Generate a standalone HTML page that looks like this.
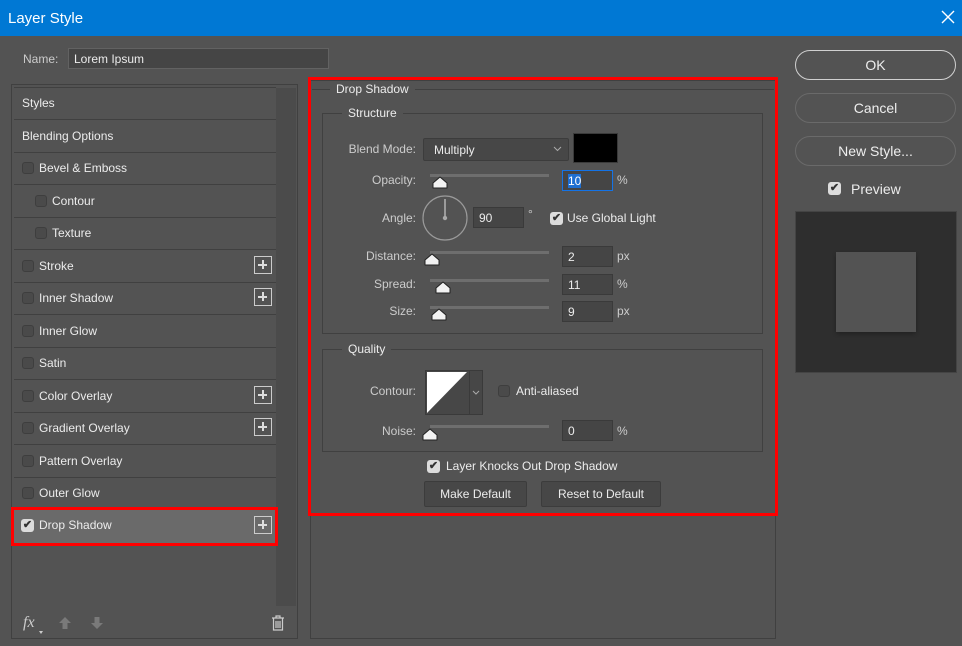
<!DOCTYPE html>
<html><head><meta charset="utf-8"><style>
*{box-sizing:border-box;margin:0;padding:0}
body{width:962px;height:646px;background:#535353;font-family:"Liberation Sans",sans-serif;font-size:12px;color:#ececec;position:relative;overflow:hidden}
.a{position:absolute}
.t{position:absolute;white-space:nowrap;line-height:14px}
.r{text-align:right}
.inp{position:absolute;background:#454545;border:1px solid #3a3a3a;height:21px;padding:3px 0 0 5px;color:#ececec}
.row{position:absolute;left:14px;width:262px;height:33px;border-bottom:1px solid #404040}
.cb{position:absolute;width:12px;height:12px;border:1px solid #3e3e3e;border-radius:3px;background:#4a4a4a}
.cbc{position:absolute;width:13px;height:13px;border-radius:3px;background:#dcdcdc;color:#333;font-size:11px;line-height:13px;text-align:center;font-weight:bold}
.plus{position:absolute;left:254px;width:18px;height:18px;border:1.5px solid #ccc;}
.plus:before{content:"";position:absolute;left:3px;top:6.5px;width:9px;height:2px;background:#ddd}
.plus:after{content:"";position:absolute;left:6.5px;top:3px;width:2px;height:9px;background:#ddd}
.track{position:absolute;left:430px;width:119px;height:3px;background:#6e6e6e}
.thumb{position:absolute}
.grp{position:absolute;border:1px solid #404040}
.leg{position:absolute;background:#535353;padding:0 6px;line-height:14px}
.btn{position:absolute;border:1px solid #6a6a6a;border-radius:15px;text-align:center;font-size:14px;line-height:28px;height:30px;color:#eee}
.bt2{position:absolute;background:#474747;border:1px solid #3c3c3c;border-radius:2px;text-align:center;line-height:24px;height:26px}
</style></head><body>
<div class="a" style="left:0;top:0;width:962px;height:36px;background:#0078d4"></div>
<div class="t" style="left:8px;top:10px;font-size:15px;color:#fff;line-height:17px">Layer Style</div>
<svg class="a" style="left:940px;top:9px" width="16" height="16"><path d="M2 2L14 14M14 2L2 14" stroke="#fff" stroke-width="1.4"/></svg>

<div class="t" style="left:23px;top:52px;color:#ccc">Name:</div>
<div class="inp" style="left:68px;top:48px;width:261px;height:21px;border-color:#626262">Lorem Ipsum</div>

<div class="a" style="left:11px;top:84px;width:287px;height:555px;border:1px solid #404040"></div>
<div class="a" style="left:276px;top:88px;width:20px;height:518px;background:#4b4b4b"></div>
<div class="a" style="left:14px;top:87px;width:262px;height:1px;background:#404040"></div>
<div class="row" style="top:87px"><div class="t" style="left:8px;top:9px">Styles</div></div>
<div class="row" style="top:120px"><div class="t" style="left:8px;top:9px">Blending Options</div></div>
<div class="row" style="top:152px"><div class="cb" style="left:8px;top:10px"></div><div class="t" style="left:25px;top:9px">Bevel &amp; Emboss</div></div>
<div class="row" style="top:185px"><div class="cb" style="left:21px;top:10px"></div><div class="t" style="left:38px;top:9px">Contour</div></div>
<div class="row" style="top:217px"><div class="cb" style="left:21px;top:10px"></div><div class="t" style="left:38px;top:9px">Texture</div></div>
<div class="row" style="top:250px"><div class="cb" style="left:8px;top:10px"></div><div class="t" style="left:25px;top:9px">Stroke</div><div class="plus" style="left:240px;top:6px"></div></div>
<div class="row" style="top:282px"><div class="cb" style="left:8px;top:10px"></div><div class="t" style="left:25px;top:9px">Inner Shadow</div><div class="plus" style="left:240px;top:6px"></div></div>
<div class="row" style="top:315px"><div class="cb" style="left:8px;top:10px"></div><div class="t" style="left:25px;top:9px">Inner Glow</div></div>
<div class="row" style="top:347px"><div class="cb" style="left:8px;top:10px"></div><div class="t" style="left:25px;top:9px">Satin</div></div>
<div class="row" style="top:380px"><div class="cb" style="left:8px;top:10px"></div><div class="t" style="left:25px;top:9px">Color Overlay</div><div class="plus" style="left:240px;top:6px"></div></div>
<div class="row" style="top:412px"><div class="cb" style="left:8px;top:10px"></div><div class="t" style="left:25px;top:9px">Gradient Overlay</div><div class="plus" style="left:240px;top:6px"></div></div>
<div class="row" style="top:445px"><div class="cb" style="left:8px;top:10px"></div><div class="t" style="left:25px;top:9px">Pattern Overlay</div></div>
<div class="row" style="top:477px;border:none"><div class="cb" style="left:8px;top:10px"></div><div class="t" style="left:25px;top:9px">Outer Glow</div></div>
<div class="a" style="left:11px;top:507px;width:267px;height:39px;border:3px solid #f00;background:#6a6a6a"></div>
<div class="cbc" style="left:21px;top:519px">✔</div>
<div class="t" style="left:39px;top:518px">Drop Shadow</div>
<div class="plus" style="left:254px;top:516px"></div>

<div class="t" style="left:23px;top:614px;font-size:16px;font-style:italic;color:#ccc;font-family:'Liberation Serif',serif;line-height:18px">fx</div>
<div class="a" style="left:39px;top:631px;width:0;height:0;border-left:2px solid transparent;border-right:2px solid transparent;border-top:3px solid #ccc"></div>
<svg class="a" style="left:58px;top:616px" width="14" height="14"><path d="M7 1L13 7H9.5V13H4.5V7H1Z" fill="#7a7a7a"/></svg>
<svg class="a" style="left:90px;top:616px" width="14" height="14"><path d="M7 13L13 7H9.5V1H4.5V7H1Z" fill="#7a7a7a"/></svg>
<svg class="a" style="left:271px;top:615px" width="14" height="16"><path d="M1 3H13M5 3V1H9V3M2.5 3.5V15H11.5V3.5M5 6V13M7 6V13M9 6V13" stroke="#ccc" stroke-width="1.2" fill="none"/></svg>

<div class="a" style="left:310px;top:80px;width:466px;height:559px;border:1px solid #404040"></div>
<div class="a" style="left:308px;top:77px;width:470px;height:439px;border:3px solid #f00"></div>
<div class="a" style="left:312px;top:89px;width:462px;height:1px;background:#404040"></div>
<div class="leg" style="left:330px;top:82px">Drop Shadow</div>
<div class="grp" style="left:322px;top:113px;width:441px;height:221px"></div>
<div class="leg" style="left:342px;top:106px">Structure</div>

<div class="t r" style="left:316px;width:100px;top:142px;color:#ccc">Blend Mode:</div>
<div class="a" style="left:423px;top:138px;width:146px;height:23px;background:#474747;border:1px solid #3c3c3c;border-radius:2px"></div>
<div class="t" style="left:434px;top:143px">Multiply</div>
<svg class="a" style="left:553px;top:146px" width="9" height="6"><path d="M1 1L4.5 4.5L8 1" stroke="#aaa" fill="none"/></svg>
<div class="a" style="left:573px;top:133px;width:45px;height:30px;background:#000;border:1px solid #3a3a3a"></div>

<div class="t r" style="left:316px;width:100px;top:173px;color:#ccc">Opacity:</div>
<div class="track" style="top:174px"></div>
<svg class="thumb" style="left:432px;top:176px" width="16" height="13"><path d="M1 12V7L8 1L15 7V12Z" fill="#f2f2f2" stroke="#222" stroke-linejoin="round"/></svg>
<div class="inp" style="left:562px;top:170px;width:51px;border-color:#1473e6"><span style="background:#1f6fd1;color:#fff">10</span></div>
<div class="t" style="left:617px;top:173px;color:#ccc">%</div>

<div class="t r" style="left:316px;width:100px;top:211px;color:#ccc">Angle:</div>
<svg class="a" style="left:421px;top:194px" width="48" height="48"><circle cx="24" cy="24" r="22" stroke="#9a9a9a" fill="none" stroke-width="1.2"/><path d="M24 5V23" stroke="#ccc" stroke-width="1.2"/><circle cx="24" cy="24" r="2.2" fill="#aaa"/></svg>
<div class="inp" style="left:473px;top:207px;width:51px">90</div>
<div class="t" style="left:528px;top:207px;color:#ccc">°</div>
<div class="cbc" style="left:550px;top:212px">✔</div>
<div class="t" style="left:567px;top:211px">Use Global Light</div>

<div class="t r" style="left:316px;width:100px;top:249px;color:#ccc">Distance:</div>
<div class="track" style="top:251px"></div>
<svg class="thumb" style="left:424px;top:253px" width="16" height="13"><path d="M1 12V7L8 1L15 7V12Z" fill="#f2f2f2" stroke="#222" stroke-linejoin="round"/></svg>
<div class="inp" style="left:562px;top:246px;width:51px">2</div>
<div class="t" style="left:617px;top:249px;color:#ccc">px</div>

<div class="t r" style="left:316px;width:100px;top:277px;color:#ccc">Spread:</div>
<div class="track" style="top:279px"></div>
<svg class="thumb" style="left:435px;top:281px" width="16" height="13"><path d="M1 12V7L8 1L15 7V12Z" fill="#f2f2f2" stroke="#222" stroke-linejoin="round"/></svg>
<div class="inp" style="left:562px;top:274px;width:51px">11</div>
<div class="t" style="left:617px;top:277px;color:#ccc">%</div>

<div class="t r" style="left:316px;width:100px;top:304px;color:#ccc">Size:</div>
<div class="track" style="top:306px"></div>
<svg class="thumb" style="left:431px;top:308px" width="16" height="13"><path d="M1 12V7L8 1L15 7V12Z" fill="#f2f2f2" stroke="#222" stroke-linejoin="round"/></svg>
<div class="inp" style="left:562px;top:301px;width:51px">9</div>
<div class="t" style="left:617px;top:304px;color:#ccc">px</div>

<div class="grp" style="left:322px;top:349px;width:441px;height:103px"></div>
<div class="leg" style="left:342px;top:342px">Quality</div>
<div class="t r" style="left:316px;width:100px;top:384px;color:#ccc">Contour:</div>
<svg class="a" style="left:425px;top:370px" width="46" height="45"><rect x="0.5" y="0.5" width="45" height="44" fill="#474747" stroke="#3a3a3a"/><path d="M2 2H42L2 43Z" fill="#fff"/></svg>
<div class="a" style="left:469px;top:370px;width:14px;height:45px;background:#474747;border:1px solid #3a3a3a"></div>
<svg class="a" style="left:472px;top:390px" width="8" height="5"><path d="M1 1L4 4L7 1" stroke="#aaa" fill="none"/></svg>
<div class="cb" style="left:498px;top:385px"></div>
<div class="t" style="left:516px;top:384px">Anti-aliased</div>
<div class="t r" style="left:316px;width:100px;top:424px;color:#ccc">Noise:</div>
<div class="track" style="top:425px"></div>
<svg class="thumb" style="left:422px;top:428px" width="16" height="13"><path d="M1 12V7L8 1L15 7V12Z" fill="#f2f2f2" stroke="#222" stroke-linejoin="round"/></svg>
<div class="inp" style="left:562px;top:420px;width:51px">0</div>
<div class="t" style="left:617px;top:424px;color:#ccc">%</div>

<div class="cbc" style="left:427px;top:460px">✔</div>
<div class="t" style="left:446px;top:459px">Layer Knocks Out Drop Shadow</div>
<div class="bt2" style="left:424px;top:481px;width:103px">Make Default</div>
<div class="bt2" style="left:541px;top:481px;width:120px">Reset to Default</div>

<div class="btn" style="left:795px;top:50px;width:161px;border-color:#d0d0d0">OK</div>
<div class="btn" style="left:795px;top:93px;width:161px">Cancel</div>
<div class="btn" style="left:795px;top:136px;width:161px">New Style...</div>
<div class="cbc" style="left:828px;top:182px">✔</div>
<div class="t" style="left:851px;top:181px;font-size:14px;line-height:16px">Preview</div>
<div class="a" style="left:795px;top:211px;width:162px;height:162px;background:#2e2e2e;border:1px solid #444"></div>
<div class="a" style="left:836px;top:252px;width:80px;height:80px;background:#535353;box-shadow:0 2px 4px rgba(0,0,0,.25)"></div>
</body></html>
